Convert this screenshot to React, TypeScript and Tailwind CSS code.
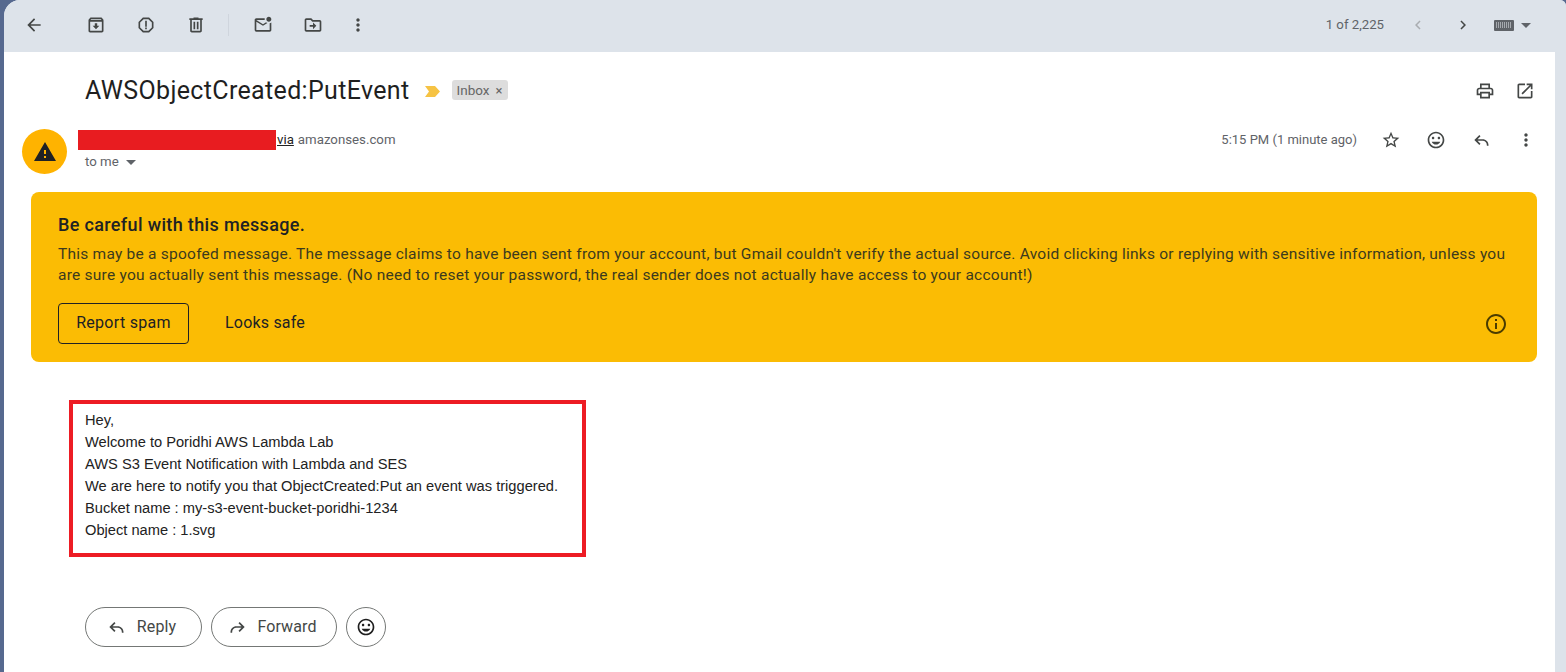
import type { ReactNode } from "react";

function Icon({ d, size = 20, className = "", children }: { d?: string; size?: number; className?: string; children?: ReactNode }) {
  return (
    <svg viewBox="0 0 24 24" width={size} height={size} className={`shrink-0 fill-current ${className}`}>
      {d && <path d={d} />}
      {children}
    </svg>
  );
}

const paths = {
  back: "M20 11H7.83l5.59-5.59L12 4l-8 8 8 8 1.41-1.41L7.83 13H20v-2z",
  archive:
    "M20.54 5.23l-1.39-1.68C18.88 3.21 18.47 3 18 3H6c-.47 0-.88.21-1.16.55L3.46 5.23C3.17 5.57 3 6.02 3 6.5V19c0 1.1.9 2 2 2h14c1.1 0 2-.9 2-2V6.5c0-.48-.17-.93-.46-1.27zM6.24 5h11.52l.83 1H5.42l.82-1zM5 19V8h14v11H5zm8.45-9h-2.9v3H8l4 4 4-4h-2.55z",
  report:
    "M15.73 3H8.27L3 8.27v7.46L8.27 21h7.46L21 15.73V8.27L15.73 3zM19 14.9L14.9 19H9.1L5 14.9V9.1L9.1 5h5.8L19 9.1v5.8zM11 7h2v7h-2zM11 15h2v2h-2z",
  trash: "M15 4V3H9v1H4v2h1v13c0 1.1.9 2 2 2h10c1.1 0 2-.9 2-2V6h1V4h-5zm2 15H7V6h10v13zM9 8h2v9H9zm4 0h2v9h-2z",
  unread:
    "M22 8.98V18c0 1.1-.9 2-2 2H4c-1.1 0-2-.9-2-2V6c0-1.1.9-2 2-2h10.1c-.06.32-.1.66-.1 1s.04.68.1 1H4l8 5 3.67-2.29c.47.43 1.02.76 1.63.98L12 13 4 8v10h16V9.9c.74-.15 1.42-.48 2-.92zM16 5c0 1.66 1.34 3 3 3s3-1.34 3-3-1.34-3-3-3-3 1.34-3 3z",
  move: "M20 6h-8l-2-2H4c-1.1 0-1.99.9-1.99 2L2 18c0 1.1.9 2 2 2h16c1.1 0 2-.9 2-2V8c0-1.1-.9-2-2-2zm0 12H4V6h5.17l2 2H20v10zm-8-4H8v-2h4V9l4 4-4 4v-3z",
  more: "M12 8c1.1 0 2-.9 2-2s-.9-2-2-2-2 .9-2 2 .9 2 2 2zm0 2c-1.1 0-2 .9-2 2s.9 2 2 2 2-.9 2-2-.9-2-2-2zm0 6c-1.1 0-2 .9-2 2s.9 2 2 2 2-.9 2-2-.9-2-2-2z",
  prev: "M15.41 7.41L14 6l-6 6 6 6 1.41-1.41L10.83 12z",
  next: "M10 6L8.59 7.41 13.17 12l-4.58 4.59L10 18l6-6z",
  print:
    "M19 8h-1V3H6v5H5c-1.66 0-3 1.34-3 3v6h4v4h12v-4h4v-6c0-1.66-1.34-3-3-3zM8 5h8v3H8V5zm8 12v2H8v-4h8v2zm2-2v-2H6v2H4v-4c0-.55.45-1 1-1h14c.55 0 1 .45 1 1v4h-2z",
  open: "M19 19H5V5h7V3H5c-1.11 0-2 .9-2 2v14c0 1.1.89 2 2 2h14c1.1 0 2-.9 2-2v-7h-2v7zM14 3v2h3.59l-9.83 9.83 1.41 1.41L19 6.41V10h2V3h-7z",
  star: "M22 9.24l-7.19-.62L12 2 9.19 8.63 2 9.24l5.46 4.73L5.82 21 12 17.27 18.18 21l-1.63-7.03L22 9.24zM12 15.4l-3.76 2.27 1-4.28-3.32-2.88 4.38-.38L12 6.1l1.71 4.04 4.38.38-3.32 2.88 1 4.28L12 15.4z",
  smile:
    "M11.99 2C6.47 2 2 6.48 2 12s4.47 10 9.99 10C17.52 22 22 17.52 22 12S17.52 2 11.99 2zM12 20c-4.42 0-8-3.58-8-8s3.58-8 8-8 8 3.58 8 8-3.58 8-8 8zm3.5-9c.83 0 1.5-.67 1.5-1.5S16.33 8 15.5 8 14 8.67 14 9.5s.67 1.5 1.5 1.5zm-7 0c.83 0 1.5-.67 1.5-1.5S9.33 8 8.5 8 7 8.67 7 9.5 7.67 11 8.5 11zm3.5 6.5c2.33 0 4.31-1.46 5.11-3.5H6.89c.8 2.04 2.78 3.5 5.11 3.5z",
  reply: "M21 19h-2v-1c0-2.76-2.24-5-5-5H7.83l3.58 3.59L10 18l-6-6 6-6 1.41 1.41L7.83 11H14c3.87 0 7 3.13 7 7v1z",
  forward: "M3 19h2v-1c0-2.76 2.24-5 5-5h6.17l-3.58 3.59L14 18l6-6-6-6-1.41 1.41L16.17 11H10c-3.87 0-7 3.13-7 7v1z",
  info: "M11 7h2v2h-2zm0 4h2v6h-2zm1-9C6.48 2 2 6.48 2 12s4.48 10 10 10 10-4.48 10-10S17.52 2 12 2zm0 18c-4.41 0-8-3.59-8-8s3.59-8 8-8 8 3.59 8 8-3.59 8-8 8z",
  warning: "M1 21h22L12 2 1 21zm12-3h-2v-2h2v2zm0-4h-2v-4h2v4z",
};

function ToolButton({ d, className = "" }: { d: string; className?: string }) {
  return (
    <button className={`flex h-10 w-10 items-center justify-center text-[#444746] ${className}`}>
      <Icon d={d} />
    </button>
  );
}

function Caret({ className = "" }: { className?: string }) {
  return <span className={`h-0 w-0 border-x-[5px] border-t-[5px] border-x-transparent border-t-[#5f6368] ${className}`} />;
}

function Toolbar() {
  return (
    <div className="flex h-[52px] items-center bg-[#dde3ea] pb-[2px] pl-[10px] pr-[35px]">
      <ToolButton d={paths.back} />
      <ToolButton d={paths.archive} className="ml-[22px]" />
      <ToolButton d={paths.report} className="ml-[10px]" />
      <ToolButton d={paths.trash} className="ml-[10px]" />
      <div className="ml-[12px] h-[22px] w-px bg-[#cfd5dd]" />
      <ToolButton d={paths.unread} className="ml-[14px]" />
      <ToolButton d={paths.move} className="ml-[10px]" />
      <button className="ml-[5px] flex h-10 w-10 items-center justify-center text-[#444746]">
        <Icon d={paths.more} size={20} />
      </button>
      <span className="ml-auto text-[13.2px] text-[#5f6368]">1 of 2,225</span>
      <button className="ml-[14px] flex h-10 w-10 items-center justify-center text-[#a9adb1]">
        <Icon d={paths.prev} size={18} />
      </button>
      <button className="ml-[5px] flex h-10 w-10 items-center justify-center text-[#444746]">
        <Icon d={paths.next} size={18} />
      </button>
      <div className="ml-[11px] flex items-center gap-[7px]">
        <span className="flex h-[11px] w-[20px] items-center justify-center rounded-[1px] bg-[#5f6368]">
          <span className="h-[6px] w-[16px] bg-[repeating-linear-gradient(90deg,#a5a9ae_0_1px,#5f6368_1px_2px)]" />
        </span>
        <Caret />
      </div>
    </div>
  );
}

function SubjectRow() {
  return (
    <div className="flex h-[56px] items-center pl-[81px] pr-[20px] pt-[22px]">
      <h1 className="text-[25px] font-normal leading-[32px] tracking-[0.34px] text-[#1f1f1f]">AWSObjectCreated:PutEvent</h1>
      <svg width="16" height="11" viewBox="0 0 16 11" className="ml-[15px] shrink-0 fill-[#f6c344]">
        <path d="M0 0h10l5 5.5-5 5.5H0l4-5.5z" />
      </svg>
      <span className="ml-[11px] mb-[2px] flex h-[20px] w-[56px] items-center justify-center gap-[6px] rounded-[3px] bg-[#dddddd] text-[13.5px] text-[#666666]">
        Inbox
        <span className="text-[13px] leading-none">×</span>
      </span>
      <div className="ml-auto flex items-center gap-[20px] text-[#444746]">
        <Icon d={paths.print} />
        <Icon d={paths.open} />
      </div>
    </div>
  );
}

function SenderRow() {
  return (
    <div className="mt-[21px] flex items-start pl-[18px] pr-[19px]">
      <div className="flex h-[45px] w-[45px] shrink-0 items-center justify-center rounded-full bg-[#ffb300] text-[#202124]">
        <Icon d={paths.warning} size={24} />
      </div>
      <div className="ml-[11px] mt-px flex flex-col">
        <div className="flex h-[20px] items-center text-[13.25px]">
          <span className="h-[20px] w-[198px] bg-[#e81c20]" />
          <span className="ml-px text-[#222222] underline">via</span>
          <span className="ml-[4px] text-[#5f6368]">amazonses.com</span>
        </div>
        <div className="ml-[7px] mt-[2px] flex h-[20px] items-center gap-[7px] text-[13.25px] text-[#5f6368]">
          to me
          <Caret />
        </div>
      </div>
      <span className="ml-auto mt-[1px] text-[13px] leading-[20px] text-[#5f6368]">5:15 PM (1 minute ago)</span>
      <div className="ml-[24px] mt-[1px] flex items-center gap-[25px] text-[#444746]">
        <Icon d={paths.star} />
        <Icon d={paths.smile} />
        <Icon d={paths.reply} />
        <Icon d={paths.more} />
      </div>
    </div>
  );
}

function WarningBanner() {
  return (
    <div className="ml-[27px] mr-[18px] mt-[18px] flex h-[170px] flex-col rounded-[8px] bg-[#fbbc04] pl-[27px] pr-[28px] pt-[21px] text-[#202124]">
      <h2 className="text-[18px] font-medium leading-[24px] tracking-[0.35px]">Be careful with this message.</h2>
      <p className="mt-[7px] text-[15.5px] leading-[21px] tracking-[0.235px] text-[#3c3a1e]">
        This may be a spoofed message. The message claims to have been sent from your account, but Gmail couldn't verify the actual source. Avoid clicking links or replying with sensitive information, unless you are sure you actually sent this message. (No need to reset your password, the real sender does not actually have access to your account!)
      </p>
      <div className="mt-[17px] flex items-center text-[16px] tracking-[0.2px]">
        <button className="flex h-[41px] w-[131px] items-center justify-center rounded-[4px] border border-[#202124] pb-px tracking-[0.3px]">Report spam</button>
        <button className="ml-[36px] pb-px">Looks safe</button>
        <Icon d={paths.info} size={24} className="ml-auto mr-px text-[#4a3c00]" />
      </div>
    </div>
  );
}

function MessageBody() {
  const lines = [
    "Hey,",
    "Welcome to Poridhi AWS Lambda Lab",
    "AWS S3 Event Notification with Lambda and SES",
    "We are here to notify you that ObjectCreated:Put an event was triggered.",
    "Bucket name : my-s3-event-bucket-poridhi-1234",
    "Object name : 1.svg",
  ];
  return (
    <div className="ml-[65px] mt-[38px] h-[157px] w-[517px] border-[4px] border-[#ed1c24] pl-[12px] pt-[5px] font-['Liberation_Sans',Arial,sans-serif] text-[14.67px] leading-[22px] text-[#222222]">
      {lines.map((line) => (
        <div key={line}>{line}</div>
      ))}
    </div>
  );
}

function ReplyActions() {
  return (
    <div className="ml-[81px] mt-[50px] flex items-center gap-[9px] text-[16px] tracking-[0.1px] text-[#444746]">
      <button className="flex h-10 w-[117px] items-center justify-center gap-[11px] rounded-full border border-[#747775] pr-[5px]">
        <Icon d={paths.reply} />
        Reply
      </button>
      <button className="flex h-10 w-[126px] items-center justify-center gap-[9px] rounded-full border border-[#747775] pr-[3px]">
        <Icon d={paths.forward} />
        Forward
      </button>
      <button className="flex h-10 w-10 items-center justify-center rounded-full border border-[#747775] text-[#1f1f1f]">
        <Icon d={paths.smile} />
      </button>
    </div>
  );
}

export default function App() {
  return (
    <div className="h-[672px] w-[1566px] overflow-hidden bg-[#56698f] pl-[4px] font-['Roboto',Arial,sans-serif]">
      <div className="h-full overflow-hidden rounded-tl-[16px] rounded-tr-[6px] bg-[#dde3ea]">
        <Toolbar />
        <div className="mr-[11px] h-[620px] bg-white">
          <SubjectRow />
          <SenderRow />
          <WarningBanner />
          <MessageBody />
          <ReplyActions />
        </div>
      </div>
    </div>
  );
}
